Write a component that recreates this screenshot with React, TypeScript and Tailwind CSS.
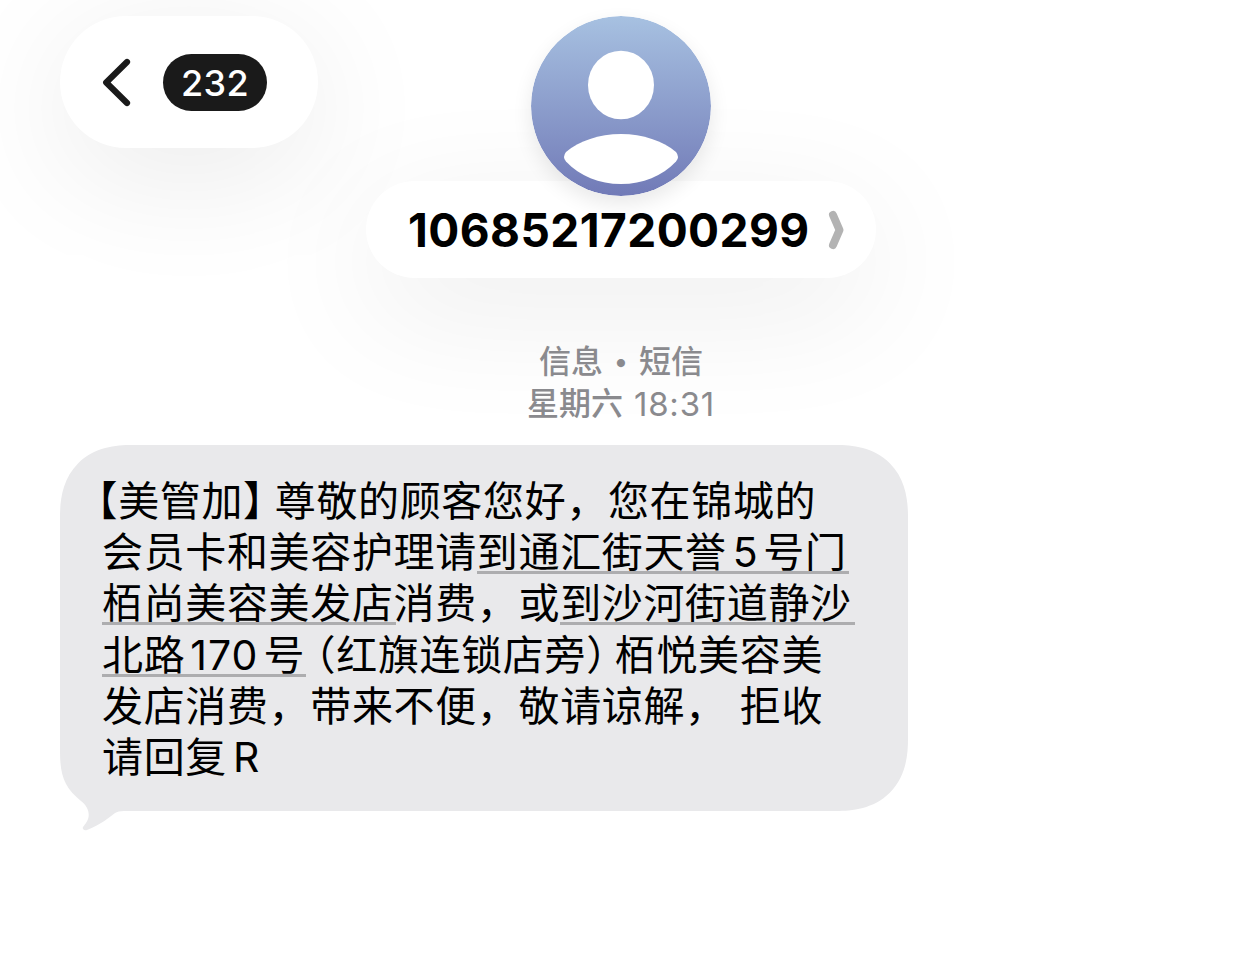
import { clsx } from 'clsx';

interface Run {
    text: string;
    link?: boolean;
    className?: string;
}

const lines: Run[][] = [
    [
        { text: '【', className: "-ml-[5px] [font-feature-settings:'halt']" },
        { text: '美管加' },
        { text: '】', className: "[font-feature-settings:'halt']" },
        { text: '尊敬的顾客您好，您在锦城的', className: 'ml-[10.5px]' },
    ],
    [
        { text: '会员卡和美容护理请' },
        { text: '到通汇街天誉', link: true },
        { text: '5', link: true, className: 'pl-[6px] pr-[5px]' },
        { text: '号门', link: true, className: 'pr-[2px]' },
    ],
    [
        { text: '栢尚美容美发店', link: true, className: 'pr-[2px] -mr-[2px]' },
        { text: '消费，或' },
        { text: '到沙河街道静沙', link: true, className: 'pr-[3px]' },
    ],
    [
        { text: '北路', link: true },
        { text: '170', link: true, className: 'pl-[5px] pr-[5px] tracking-[1px]' },
        { text: '号', link: true, className: 'pr-[1px]' },
        { text: '（', className: "ml-[9px] [font-feature-settings:'halt']" },
        { text: '红旗连锁店旁' },
        { text: '）', className: "[font-feature-settings:'halt']" },
        { text: '栢悦美容美', className: 'ml-[7.5px]' },
    ],
    [{ text: '发店消费，带来不便，敬请谅解，' }, { text: '拒收', className: 'ml-[13px]' }],
    [{ text: '请回复' }, { text: 'R', className: 'ml-[6px]' }],
];

const Avatar = () => {
    return (
        <svg
            viewBox="0 0 180 180"
            className="relative z-10 size-[180px] rounded-full shadow-[0_8px_20px_rgba(0,0,0,0.09)]"
        >
            <defs>
                <linearGradient id="avatar" x1="0" y1="0" x2="0" y2="1">
                    <stop offset="0" stopColor="#a7c1e1" />
                    <stop offset="1" stopColor="#717ab7" />
                </linearGradient>
            </defs>
            <circle cx="90" cy="90" r="90" fill="url(#avatar)" />
            <ellipse cx="90" cy="69" rx="33" ry="34.3" fill="#fff" />
            <path
                d="M35 136C48 125 68 118 90 118s42 7 55 18q4 5 0 9.500C131 160 112 168 90 168s-41-8-55-22.500q-4-4.500 0-9.500z"
                fill="#fff"
            />
        </svg>
    );
};

const BackButton = () => {
    return (
        <button className="ml-[60px] mt-4 flex h-[132px] w-[258px] items-center rounded-full bg-white pl-[42px] shadow-[0_26px_130px_rgba(0,0,0,0.085)]">
            <svg
                viewBox="0 0 30 48"
                className="h-12 w-[30px] overflow-visible"
                fill="none"
                stroke="#1a1a1a"
                strokeWidth="6.2"
            >
                <path d="M25 4 4.200 24.500l20.800 20.500" strokeLinecap="round" strokeLinejoin="round" />
            </svg>
            <span className="ml-[31px] flex h-[57px] w-[104px] items-center justify-center rounded-full bg-[#1a1a1a] pt-0.5 text-[36px] font-medium tracking-[0.3px] text-white">
                232
            </span>
        </button>
    );
};

const Contact = () => {
    return (
        <div className="mt-4 flex flex-col items-center">
            <Avatar />
            <div className="-mt-[15px] flex h-[97px] w-[510px] items-center rounded-full bg-white pl-[42px] pt-px shadow-[0_32px_130px_rgba(0,0,0,0.08)]">
                <span className="w-[420px] whitespace-nowrap text-[46px] font-bold tracking-[0.45px]">
                    10685217200299
                </span>
                <svg
                    viewBox="0 0 16 38"
                    className="h-[38px] w-4 overflow-visible"
                    fill="none"
                    stroke="#b3b3b3"
                    strokeWidth="8"
                >
                    <path d="M5 4 11.500 19 5 34" strokeLinecap="round" strokeLinejoin="round" />
                </svg>
            </div>
        </div>
    );
};

const Bubble = () => {
    return (
        <div className="relative ml-[60px] mt-5 h-[366px] w-[848px] rounded-[72px] bg-[#e9e9eb] pl-[42px] pt-[31px] [corner-shape:superellipse(1.25)]">
            {/* tail hangs below the bottom left corner */}
            <svg viewBox="0 0 80 92" className="absolute left-0 top-[295px] h-[92px] w-20" fill="#e9e9eb">
                <path d="M0 0V12C0 36 5 48 21 61 29 67 31 76 26 83L23 87C22 89 24 91 27 90 42 84 48 78 55 73Q58 71 64 71H80V0z" />
            </svg>
            <div className="relative text-[41px] tracking-[0.65px] text-black">
                {lines.map((line, i) => (
                    <div key={i} className="flex h-[51.2px] whitespace-nowrap leading-[50.4px]">
                        {line.map((run, j) => (
                            <span
                                key={j}
                                className={clsx(
                                    'h-[47px] [text-spacing-trim:space-all]',
                                    run.link && 'border-b-[3px] border-[#adadaf]',
                                    run.className,
                                )}
                            >
                                {run.text}
                            </span>
                        ))}
                    </div>
                ))}
            </div>
        </div>
    );
};

export default function App() {
    return (
        <main
            lang="zh-CN"
            className="h-[978px] w-[1242px] overflow-hidden bg-white font-[Inter,'Noto_Sans_CJK_SC',sans-serif]"
        >
            <header className="grid grid-cols-[366px_510px_366px] items-start">
                <BackButton />
                <Contact />
            </header>
            <div className="relative mt-[63px] text-center text-[32px] leading-[42px] text-[#8a8a8e]">
                <p className="flex items-center justify-center font-medium">
                    信息<span className="w-9 text-[26px]">•</span>短信
                </p>
                <p className="flex items-center justify-center font-medium">
                    星期六<span className="ml-[11px] text-[33px] font-normal tracking-[0.8px]">18:31</span>
                </p>
            </div>
            <Bubble />
        </main>
    );
}
